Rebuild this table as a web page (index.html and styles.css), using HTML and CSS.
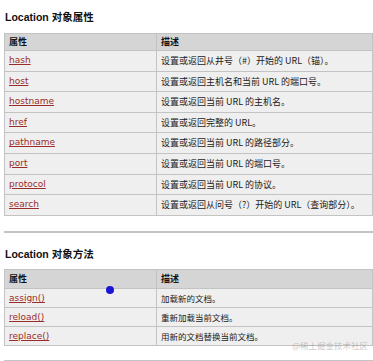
FILE: index.html
```html
<!DOCTYPE html>
<html lang="zh-CN">
<head>
<meta charset="utf-8">
<title>Location 对象</title>
<link rel="stylesheet" href="styles.css">
</head>
<body>
<div class="page">
  <h2 class="title title-first">Location 对象属性</h2>
  <table class="data data-props">
    <colgroup><col class="c1"><col class="c2"></colgroup>
    <thead><tr><th>属性</th><th>描述</th></tr></thead>
    <tbody>
      <tr><td><a href="#">hash</a></td><td>设置或返回从井号（#）开始的 URL（锚）。</td></tr>
      <tr><td><a href="#">host</a></td><td>设置或返回主机名和当前 URL 的端口号。</td></tr>
      <tr><td><a href="#">hostname</a></td><td>设置或返回当前 URL 的主机名。</td></tr>
      <tr><td><a href="#">href</a></td><td>设置或返回完整的 URL。</td></tr>
      <tr><td><a href="#">pathname</a></td><td>设置或返回当前 URL 的路径部分。</td></tr>
      <tr><td><a href="#">port</a></td><td>设置或返回当前 URL 的端口号。</td></tr>
      <tr><td><a href="#">protocol</a></td><td>设置或返回当前 URL 的协议。</td></tr>
      <tr><td><a href="#">search</a></td><td>设置或返回从问号（?）开始的 URL（查询部分）。</td></tr>
    </tbody>
  </table>
  <hr class="rule rule-mid">
  <h2 class="title">Location 对象方法</h2>
  <table class="data data-methods">
    <colgroup><col class="c1"><col class="c2"></colgroup>
    <thead><tr><th>属性</th><th>描述</th></tr></thead>
    <tbody>
      <tr><td><a href="#">assign()</a></td><td>加载新的文档。</td></tr>
      <tr><td><a href="#">reload()</a></td><td>重新加载当前文档。</td></tr>
      <tr><td><a href="#">replace()</a></td><td>用新的文档替换当前文档。</td></tr>
    </tbody>
  </table>
  <hr class="rule rule-end">
</div>
<span class="cursor-dot"></span>
<span class="watermark">@稀土掘金技术社区</span>
</body>
</html>
```
FILE: styles.css
```css
html, body {
  margin: 0;
  padding: 0;
  background: #ffffff;
}
body {
  width: 373px;
  height: 361px;
  overflow: hidden;
  position: relative;
  font-family: "DejaVu Sans", "Noto Sans CJK SC", sans-serif;
  color: #000;
}
.page {
  padding-left: 4px;
}
.title {
  margin: 14px 0 8px 1px;
  font-family: "Liberation Sans", "Noto Sans CJK SC", sans-serif;
  font-size: 10.5px;
  line-height: 14px;
  font-weight: bold;
  color: #111;
}
.title-first {
  margin-top: 10px;
  margin-bottom: 8.5px;
}
.data {
  width: 369px;
  border-collapse: collapse;
  table-layout: fixed;
  border: 1px solid #b5b5b5;
}
.c1 { width: 152px; }
.data th {
  background: #d5d5d5;
  border: 1px solid #c3c3c3;
  text-align: left;
  font-family: "Noto Sans CJK SC", sans-serif;
  font-weight: bold;
  font-size: 9px;
  color: #111;
  padding: 0 4px;
  line-height: 16.5px;
}
.data td {
  background: #efefef;
  border: 1px solid #c3c3c3;
  padding: 0 4px;
  font-size: 9px;
  line-height: 19.6px;
  color: #222;
  white-space: nowrap;
  overflow: hidden;
}
.data td:nth-child(2) {
  font-family: "Noto Sans CJK SC", "DejaVu Sans", sans-serif;
}
.data a {
  color: #9a2c2a;
  text-decoration: underline;
  font-family: "DejaVu Sans", sans-serif;
}
.data-methods th {
  line-height: 18px;
}
.data-methods td {
  line-height: 18px;
  font-size: 8.5px;
}
.data-methods td a {
  font-size: 9px;
}
.rule {
  border: 0;
  height: 2px;
  background: #c4c4c4;
  margin: 15px 0 0 0;
}
.rule-end {
  margin-top: 14px;
}
.cursor-dot {
  position: absolute;
  left: 106px;
  top: 286px;
  width: 8px;
  height: 8px;
  border-radius: 50%;
  background: #1a14d6;
}
.watermark {
  position: absolute;
  left: 292px;
  top: 339px;
  font-family: "Noto Sans CJK SC", sans-serif;
  font-size: 8.5px;
  line-height: 12px;
  color: rgba(150, 150, 150, 0.55);
}
```
